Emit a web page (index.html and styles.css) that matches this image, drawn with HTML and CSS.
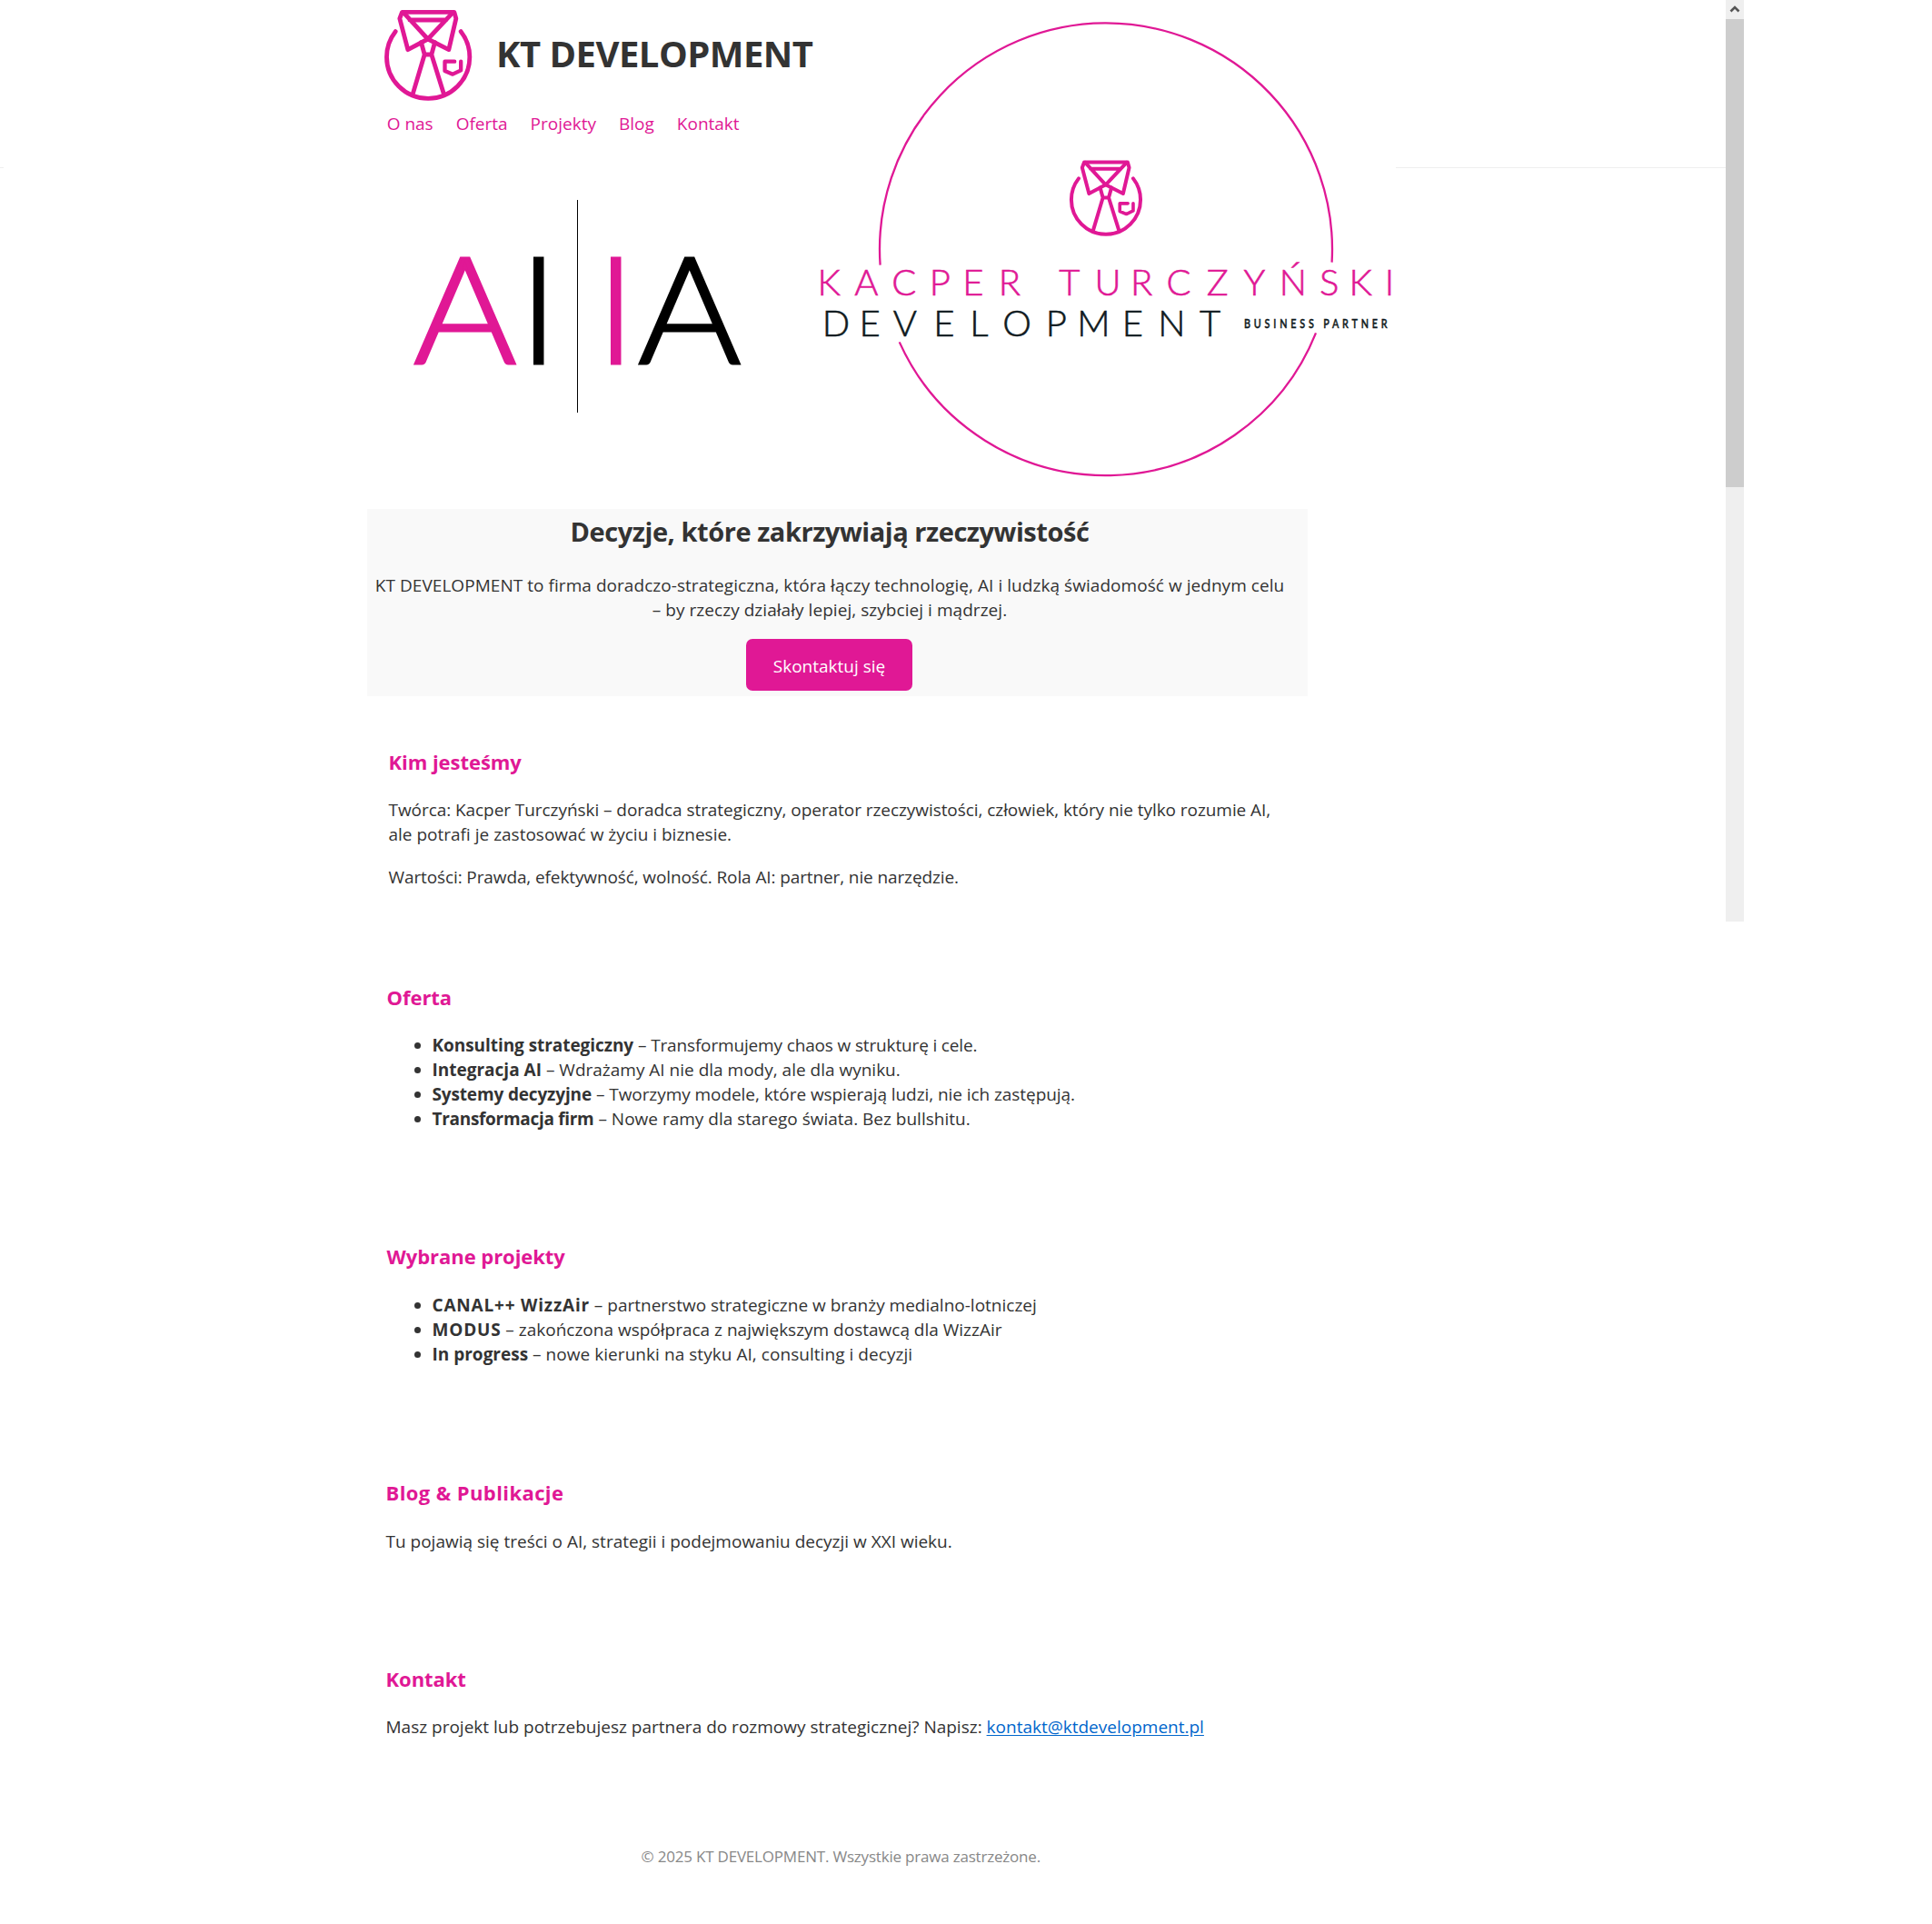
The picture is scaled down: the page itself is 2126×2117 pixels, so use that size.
FILE: index.html
```html
<!DOCTYPE html>
<html lang="pl">
<head>
<meta charset="utf-8">
<title>KT DEVELOPMENT</title>
<link rel="stylesheet" href="styles.css">
</head>
<body>
<div class="page">
  <header class="top">
    <div class="top-rule"></div>
    <div class="top-cover"></div>
    <div class="brand">
      <div class="brand-row">
        <svg class="brand-icon" viewBox="60 25 305 315" aria-hidden="true">
          <g id="shirt" fill="none" stroke="#e01895" stroke-width="14.5" stroke-linecap="round" stroke-linejoin="round">
            <path d="M105 105C87 128 76 158 76 189A137 137 0 0 0 350 189C350 158 339 128 321 105"/>
            <path d="M127 41H299L305 62L281 165L212 130L146 165L119 62Z"/>
            <path d="M131 42L212 130L295 42M152 67H272"/>
            <path d="M190 141L201 181H224L235 141M201 181L162 312M224 181L265 312"/>
            <path d="M300 204H268V235L294 246L321 233V204" stroke-width="13"/>
          </g>
        </svg>
        <h1 class="brand-name">KT DEVELOPMENT</h1>
      </div>
      <nav class="nav">
        <a href="#o-nas">O nas</a>
        <a href="#oferta">Oferta</a>
        <a href="#projekty">Projekty</a>
        <a href="#blog">Blog</a>
        <a href="#kontakt">Kontakt</a>
      </nav>
    </div>
    <svg class="ai-mark" viewBox="404 184 476 376">
      <g class="ai-text">
        <text class="ai-pink" transform="translate(511.7 399.7) scale(1.05 1)">A</text>
        <text transform="translate(592.7 399.7)">I</text>
        <text class="ai-pink" transform="translate(677.6 399.7)">I</text>
        <text transform="translate(758.7 399.7) scale(1.05 1)">A</text>
      </g>
      <path d="M635.5 220V454" stroke="#000" stroke-width="1"/>
    </svg>
    <svg class="round-logo" viewBox="880 0 656 560">
      <path d="M968.6 291.7A249 249 0 1 1 1465.6 288.6M989.7 376.4A249 249 0 0 0 1448 366.4" fill="none" stroke="#e01895" stroke-width="2.3"/>
      <use href="#shirt" transform="translate(1157.8 167.2) scale(.2778)"/>
      <text class="word pink" y="325.4" x="899.6 940.2 981.3 1022.8 1059.2 1098.7 1140 1165.3 1204.5 1243.9 1283.6 1327.8 1368.5 1407.8 1451.9 1484.5 1523.7">KACPER TURCZYŃSKI</text>
      <text class="word dark" y="370.2" x="904.8 945.6 982.8 1027.2 1067.2 1103.2 1150.7 1185.2 1234.8 1274.2 1320">DEVELOPMENT</text>
      <text class="word-small dark" transform="translate(1369 361) scale(.8 1)" textLength="197">BUSINESS PARTNER</text>
    </svg>
  </header>

  <main class="content">
    <section class="hero">
      <h2>Decyzje, które zakrzywiają rzeczywistość</h2>
      <p><span class="loose">KT DEVELOPMENT to firma doradczo-strategiczna, która łączy technologię, AI i ludzką świadomość w jednym celu<br>– by rzeczy działały lepiej, szybciej i mądrzej.</span></p>
      <a class="button" href="#kontakt">Skontaktuj się</a>
    </section>

    <section class="about" id="o-nas">
      <h3>Kim jesteśmy</h3>
      <p><span class="tight">Twórca: Kacper Turczyński – doradca strategiczny, operator rzeczywistości, człowiek, który nie tylko rozumie AI,</span><br>ale potrafi je zastosować w życiu i biznesie.</p>
      <p class="values">Wartości: Prawda, efektywność, wolność. Rola AI: partner, nie narzędzie.</p>
    </section>

    <section class="offer" id="oferta">
      <h3>Oferta</h3>
      <ul>
        <li><strong class="tight">Konsulting strategiczny</strong> <span class="tighter">– Transformujemy chaos w strukturę i cele.</span></li>
        <li><strong>Integracja AI</strong> – Wdrażamy AI nie dla mody, ale dla wyniku.</li>
        <li><strong class="tighter">Systemy decyzyjne</strong> <span class="tight">– Tworzymy modele, które wspierają ludzi, nie ich zastępują.</span></li>
        <li><strong class="tightest">Transformacja firm</strong> – Nowe ramy dla starego świata. Bez bullshitu.</li>
      </ul>
    </section>

    <section class="projects" id="projekty">
      <h3>Wybrane projekty</h3>
      <ul>
        <li><strong class="wide">CANAL++ WizzAir</strong> – partnerstwo strategiczne w branży medialno-lotniczej</li>
        <li><strong class="wide">MODUS</strong> – zakończona współpraca z największym dostawcą dla WizzAir</li>
        <li><strong>In progress</strong> <span class="loose">– nowe kierunki na styku AI, consulting i decyzji</span></li>
      </ul>
    </section>

    <section class="blog" id="blog">
      <h3>Blog &amp; Publikacje</h3>
      <p>Tu pojawią się treści o AI, strategii i podejmowaniu decyzji w XXI wieku.</p>
    </section>

    <section class="contact" id="kontakt">
      <h3>Kontakt</h3>
      <p>Masz projekt lub potrzebujesz partnera do rozmowy strategicznej? Napisz: <a class="mail" href="mailto:kontakt@ktdevelopment.pl">kontakt@ktdevelopment.pl</a></p>
    </section>
  </main>

  <footer class="footer">© 2025 KT DEVELOPMENT. Wszystkie prawa zastrzeżone.</footer>
</div>
<div class="scrollbar">
  <svg class="scroll-up" viewBox="0 0 20 21" aria-hidden="true"><path d="M5.5 12.5L10 8L14.5 12.5" fill="none" stroke="#555" stroke-width="2.6"/></svg>
  <div class="scroll-thumb"></div>
</div>
</body>
</html>
```
FILE: styles.css
```css
* { box-sizing: border-box; }

body {
  margin: 0;
  display: flex;
  align-items: flex-start;
  height: 2117px;
  overflow: hidden;
  background: #fff;
  color: #333;
  font: 19px/27px "Open Sans", "Noto Sans", sans-serif;
}

h1, h2, h3, p, ul { margin: 0; }

.page { width: 1899px; }

/* Header: brand and navigation, the AI mark and the round logo */
.top {
  display: grid;
  grid-template-columns: 404px 476px 656px 1fr;
  grid-template-rows: 185px 375px;
}

.top-rule {
  grid-area: 1 / 1 / 2 / -1;
  border-bottom: 1px solid #eee;
}

.top-cover {
  grid-area: 1 / 1 / 3 / 4;
  margin-left: 4px;
  background: #fff;
}

.brand {
  grid-area: 1 / 2 / 2 / 3;
  padding: 8px 0 0 16px;
}

.brand-row {
  display: flex;
  gap: 24px;
}

.brand-icon {
  flex: none;
  width: 102px;
  height: 105px;
}

.brand-name {
  margin-top: 24px;
  font-size: 40px;
  line-height: 54px;
  font-weight: 700;
  letter-spacing: -0.53px;
  white-space: nowrap;
}

.nav {
  display: flex;
  gap: 25px;
  margin: 10px 0 0 5.7px;
}

.nav a {
  color: #e01895;
  text-decoration: none;
  white-space: nowrap;
}

.ai-mark {
  grid-area: 2 / 2 / 3 / 3;
  width: 476px;
  height: 376px;
  margin-top: -1px;
}

.ai-text {
  font: 300 164.8px Lato, sans-serif;
  text-anchor: middle;
  fill: #000;
  stroke: #000;
  stroke-width: 3px;
}

.ai-pink {
  fill: #e01895;
  stroke: #e01895;
}

.round-logo {
  grid-area: 1 / 3 / 3 / 4;
  width: 656px;
  height: 560px;
}

.word {
  font: 300 40px Lato, sans-serif;
  stroke-width: 0.6px;
}

.word-small {
  font: 500 13.5px Lato, sans-serif;
  stroke-width: 0.5px;
}

.pink { fill: #e01895; stroke: #e01895; }
.dark { fill: #0f1a20; stroke: #0f1a20; }

/* Content */
.content {
  padding-left: 404px;
  white-space: nowrap;
}

.hero {
  width: 1035px;
  height: 206px;
  padding: 5px 17px 6px 0;
  background: #f9f9f9;
  text-align: center;
}

.hero h2 {
  margin-bottom: 26px;
  font-size: 29px;
  line-height: 40px;
  letter-spacing: -0.45px;
}

.button {
  display: block;
  width: 183px;
  height: 57px;
  margin: 18px auto 0 417px;
  border-radius: 7px;
  background: #e01895;
  color: #fff;
  line-height: 61px;
  text-decoration: none;
}

h3 {
  color: #e01895;
  font-size: 22px;
  line-height: 30px;
  letter-spacing: -0.05px;
}

.about { padding: 57px 0 0 23.5px; }
.about p { margin-top: 25px; }
.about .values {
  margin-top: 20px;
  letter-spacing: -0.11px;
}

ul {
  margin-top: 25px;
  padding-left: 50px;
}

.offer { padding: 103px 0 0 21.5px; }
.projects { padding: 122px 0 0 21.5px; }
.projects ul { margin-top: 26px; }
.blog { padding: 123px 0 0 20.5px; }
.blog h3 { letter-spacing: 0.4px; }
.blog p { margin-top: 26px; }
.contact { padding: 122px 0 0 20.5px; }
.contact p { margin-top: 25px; }

.mail {
  color: #0066cc;
  text-underline-offset: 2px;
}

.loose { letter-spacing: 0.05px; }
.tight { letter-spacing: -0.06px; }
.tighter { letter-spacing: -0.15px; }
.tightest { letter-spacing: -0.3px; }
.wide { letter-spacing: 0.8px; }

.footer {
  margin: 117px 0 0 705.5px;
  color: #888;
  font-size: 17px;
  line-height: 24px;
  letter-spacing: -0.2px;
}

/* Window scrollbar */
.scrollbar {
  width: 20px;
  height: 1014px;
  background: #efefef;
}

.scroll-up {
  display: block;
  width: 20px;
  height: 21px;
}

.scroll-thumb {
  height: 515px;
  background: #cdcdcd;
}
```
